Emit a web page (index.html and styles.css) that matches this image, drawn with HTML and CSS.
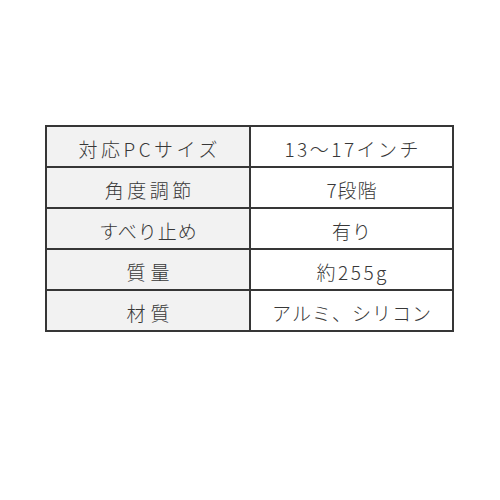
FILE: index.html
```html
<!DOCTYPE html>
<html lang="ja">
<head>
<meta charset="utf-8">
<link rel="stylesheet" href="styles.css">
</head>
<body>
<div class="page">
  <table class="spec">
    <tr><td class="label">対応PCサイズ</td><td class="value num">13〜17インチ</td></tr>
    <tr><td class="label">角度調節</td><td class="value">7段階</td></tr>
    <tr><td class="label tight">すべり止め</td><td class="value">有り</td></tr>
    <tr><td class="label wide">質量</td><td class="value num">約255g</td></tr>
    <tr><td class="label wide">材質</td><td class="value">アルミ、シリコン</td></tr>
  </table>
</div>
</body>
</html>
```

FILE: styles.css
```css
html, body {
  margin: 0;
  padding: 0;
  background: #ffffff;
}

.page {
  width: 500px;
  height: 500px;
  padding: 125px 0 0 45px;
  box-sizing: border-box;
}

.spec {
  border-collapse: separate;
  border-spacing: 0;
  border-top: 2px solid #363636;
  border-left: 2px solid #363636;
  font-family: "Noto Sans CJK JP", "Noto Sans", sans-serif;
  font-weight: 300;
  font-size: 19px;
  color: #383838;
}

.spec td {
  padding: 3px 0 0 0;
  box-sizing: border-box;
  height: 41px;
  border-right: 2px solid #363636;
  border-bottom: 2px solid #363636;
  text-align: center;
  vertical-align: middle;
  line-height: 1;
}

.spec .label {
  width: 204px;
  background: #f2f2f2;
  letter-spacing: 3.5px;
  text-indent: 3.5px;
}

.spec .label.tight {
  letter-spacing: 1px;
  text-indent: 1px;
}

.spec .label.wide {
  letter-spacing: 5px;
  text-indent: 5px;
}

.spec .value {
  width: 203px;
  background: #ffffff;
  letter-spacing: 1px;
  text-indent: 1px;
}

.spec .value.num {
  letter-spacing: 2.5px;
  text-indent: 2.5px;
}
```
